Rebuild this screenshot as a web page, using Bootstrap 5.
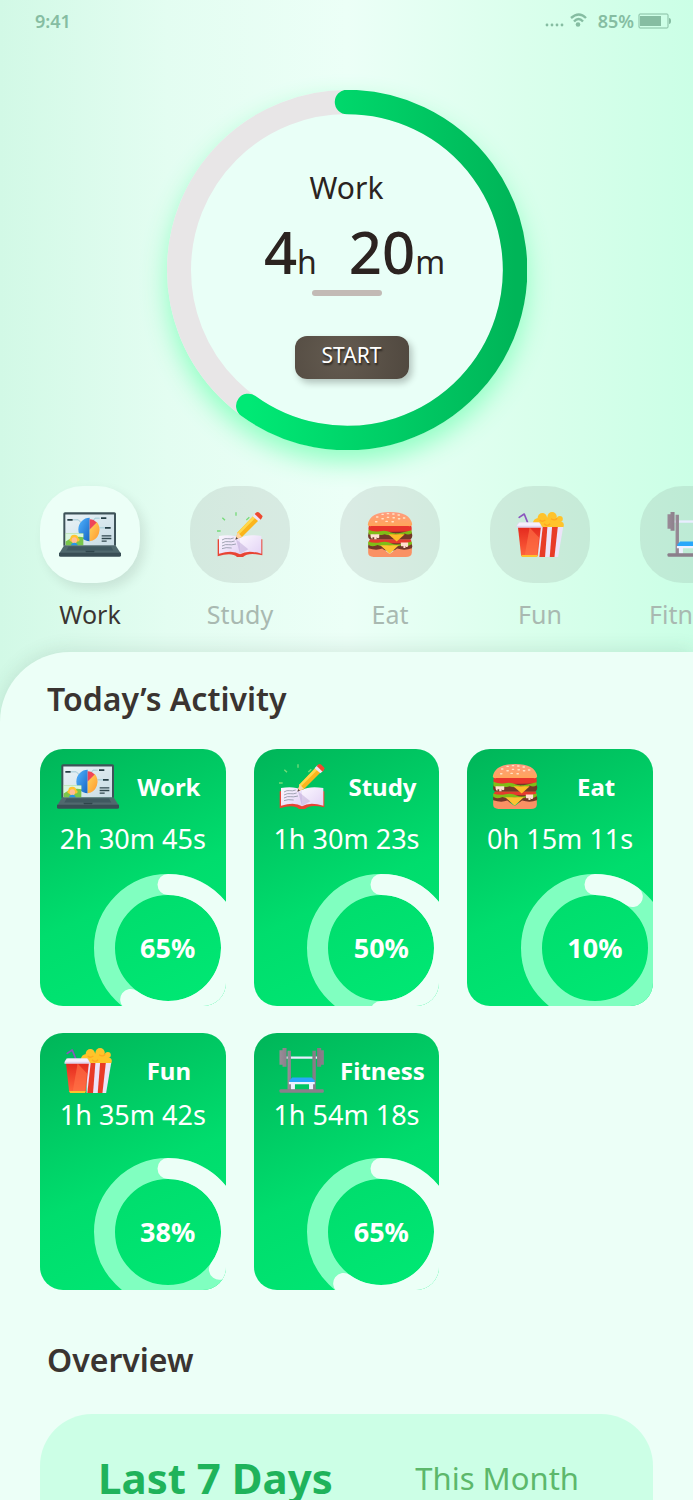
<!DOCTYPE html>
<html lang="en">
<head>
<meta charset="utf-8">
<meta name="viewport" content="width=device-width, initial-scale=1">
<title>Activity Timer</title>
<link href="https://cdn.jsdelivr.net/npm/bootstrap@5.3.0/dist/css/bootstrap.min.css" rel="stylesheet">
<style>
body{font-family:"Noto Sans","Open Sans",sans-serif;color:#3a3431;background:linear-gradient(90deg,#d2f9e6 0,#e3fdf1 24%,#ecfff7 50%,#daffec 76%,#cbffe6 100%);line-height:1.2}
.status{height:44px;padding:0 22px 0 35px;color:#86bda2;font-size:18px;font-weight:600}
.timer{width:360px;height:360px;margin:46px auto 0;border-radius:50%;box-shadow:0 12px 26px #8effc2}
.timer>*{grid-area:1/1}
.timer-body{padding-top:80px;color:#2b2320}
.timer-name{font-size:30px;line-height:36px}
.clock{gap:32px;padding-left:16px;margin-top:8px;line-height:76px;font-size:58px;font-weight:500}
.clock small{font-size:32px;font-weight:400;line-height:1}
.rule{width:70px;height:6px;border-radius:3px;background:#c2bab5}
.start{width:114px;height:43px;margin:40px 0 0 10px;padding:0 0 3px;border:0;border-radius:12px;background:radial-gradient(circle at 40% 45%,#645b50,#50483f);box-shadow:3px 4px 7px #0000003d;color:#fff;font-size:21px;text-shadow:1px 2px 2px #0009}
.start:hover{color:#fff;background:#50483f}
.tabs{gap:50px;padding:36px 40px 0;height:202px}
.tab{width:100px;color:#a9b9b1;font-size:25px;line-height:32px}
.tile{height:97px;margin-bottom:15px;border-radius:43px;background:#60606020}
.tab.active{color:#3a3431}
.tab.active .tile{background:#ecfff7;box-shadow:5px 6px 12px #00000018}
.panel{padding:25px 40px 0;border-radius:70px 0 0;background:#ecfff7;box-shadow:0 -3px 18px #3050401f}
.heading{font-size:32px;font-weight:600;line-height:44px;margin:0;padding-left:7px}
.activities{--bs-gutter-x:28px;--bs-gutter-y:27px;margin-top:1px}
.activity{height:257px;padding-top:15px;border-radius:23px;background:linear-gradient(155deg,#00b559,#00dd6d 55%,#00e974);color:#fff}
.activity-head{padding:0 8px 0 16px}
.icon-box{width:64px}
.activity-name{font-size:24px;font-weight:700;line-height:44px}
.spent{font-size:27px;line-height:36px;margin-top:12px}
.spent.near{margin-top:4px}
.ring{width:148px;height:148px;margin:auto -16px -16px auto}
.ring>*{grid-area:1/1}
.percent{font-size:27px;font-weight:700}
.overview{margin-top:32px;padding:36px 58px 0;border-radius:52px 52px 0 0;background:#ccffe6}
.range{color:#5cb86b;font-size:31px;line-height:56px}
.range.active{color:#1fb35b;font-size:42px;font-weight:700}
</style>
</head>
<body class="vh-100 overflow-hidden d-flex flex-column">
<svg width="0" height="0" class="position-absolute" aria-hidden="true">
<defs>
<linearGradient id="sweep"><stop offset="0" stop-color="#00e975"/><stop offset="1" stop-color="#00b558"/></linearGradient>
<linearGradient id="blue" x2="1" y2="1"><stop stop-color="#52b4ff"/><stop offset="1" stop-color="#1767c5"/></linearGradient>
<linearGradient id="gold" x2="1" y2="1"><stop stop-color="#ffd45c"/><stop offset="1" stop-color="#ff972f"/></linearGradient>
<linearGradient id="bun" x2="0" y2="1"><stop stop-color="#ff9b80"/><stop offset="1" stop-color="#ffa659"/></linearGradient>
<linearGradient id="cup" x2="0" y2="1"><stop stop-color="#e3271d"/><stop offset="1" stop-color="#ff643c"/></linearGradient>
<linearGradient id="steel"><stop stop-color="#9a8c98"/><stop offset=".5" stop-color="#6f6570"/><stop offset="1" stop-color="#8b7f8b"/></linearGradient>
<linearGradient id="screen" x2="1" y2="1"><stop stop-color="#e9f3f7"/><stop offset="1" stop-color="#c8dce4"/></linearGradient>
<linearGradient id="page" x2="1" y2="1"><stop stop-color="#fbf7ff"/><stop offset="1" stop-color="#e3d3f5"/></linearGradient>
</defs>
<symbol id="work" viewBox="0 0 186 134">
<path d="M18 0H166q5 0 5 5V101H13V5q0-5 5-5Z" fill="#3e5359"/><path d="M19 7H165V100H19Z" fill="url(#screen)"/>
<path d="M42 23H58L70 35M98 32L108 18H122M122 47H140" fill="none" stroke="#9fc8d4" stroke-width="3"/>
<path d="M25 23H41M126 18H142M138 47H155" stroke="#263e45" stroke-width="5"/>
<path d="M92 17V87A34 35 0 0 1 92 17Z" fill="url(#blue)"/><path d="M92 52L113 29A34 35 0 0 1 92 87Z" fill="url(#gold)"/><path d="M92 52V21Q105 21 113 31Z" fill="#ef4558"/>
<path d="M128 71H157M128 79H157M128 87H143" stroke="#30474e" stroke-width="4"/>
<path d="M20 64H73V100H20Z" fill="#79c64b"/><path d="M20 64H73V75Q44 70 20 88Z" fill="#d9f5e0"/>
<circle cx="46" cy="80" r="12" fill="#ffc32f"/><circle cx="36" cy="83" r="5" fill="#ffc32f"/><circle cx="57" cy="83" r="5" fill="#ffc32f"/><ellipse cx="46" cy="84" rx="8" ry="9" fill="#ffbd98"/><path d="M36 100q1-8 10-8t10 8Z" fill="#2996e8"/>
<path d="M15 100H170L185 123H1Z" fill="#50696e"/><path d="M29 103H156L163 115H22Z" fill="#405960"/><path d="M79 116H107L105 120H81Z" fill="#2f454b"/><path d="M0 122H186V129q0 5-5 5H5q-5 0-5-5Z" fill="#394e55"/>
</symbol>
<symbol id="study" viewBox="0 0 138 135">
<path d="M2 82H136V130Q93 120 78 135H60Q45 120 2 133Z" fill="#e84434"/>
<path d="M6 72Q45 65 69 78V127Q48 113 6 125Z" fill="url(#page)"/><path d="M69 78Q92 65 133 72V125Q91 113 69 127Z" fill="url(#page)"/><path d="M57 82L94 112L69 126Z" fill="#a68bc5" opacity=".35"/>
<path d="M15 84Q24 78 32 80T50 78M15 93Q26 87 34 89T53 87M15 102Q26 96 34 98T57 96M15 110Q26 105 44 108" fill="none" stroke="#75818e" stroke-width="2"/>
<path d="M111 10L126 24L75 75L56 82L62 61Z" fill="#fbb51d"/><path d="M111 10L117 16L65 68L60 63Z" fill="#ffd84c"/><path d="M62 61L75 75L56 82Z" fill="#ffd3a0"/><path d="M58 75L63 80L55 83Z" fill="#554449"/>
<path d="M107 13L115 4L133 20L124 28Z" fill="#eee5f7"/><path d="M113 6Q120-3 127 2L136 11Q138 15 131 23Z" fill="#ed4930"/>
<path d="M0 57H11M16 17L24 25M57 1V11M88 24L97 16" stroke="#76db79" stroke-width="4"/>
</symbol>
<symbol id="eat" viewBox="0 0 134 134">
<path d="M6 38H129Q135 52 128 61H7Q-1 50 6 38Z" fill="#e8352c"/><path d="M4 60Q-2 77 8 83H127Q138 75 130 58Z" fill="#743728"/><path d="M8 82H130V96H6Q0 88 8 82Z" fill="#e53b2d"/><path d="M4 93H131Q137 107 127 115H8Q-2 109 4 93Z" fill="#743728"/>
<path d="M3 53Q18 60 37 57T70 61T131 54L132 63Q121 71 111 64Q98 72 84 65Q67 73 51 66Q35 71 22 66Q8 72 3 65Z" fill="#80bd17"/>
<path d="M62 66H111L87 88Z" fill="#ffbb27"/><path d="M9 66H35V76Q31 81 27 75V81H20V75H15V80Q8 78 9 66Z" fill="#ffe0cf"/>
<path d="M2 88Q20 94 39 90T72 94T132 88V96Q118 105 103 98Q87 105 66 99Q46 106 30 98Q11 106 2 97Z" fill="#80bd17"/><path d="M38 99H93L66 124Z" fill="#ffc231"/><path d="M99 91H121V101Q117 108 113 101V107H107V102H100Z" fill="#ffe0cf"/>
<path d="M2 108Q26 116 44 109L66 125L88 109Q112 116 132 108V121Q131 134 114 134H18Q2 132 2 121Z" fill="#fa9164"/>
<path d="M1 37Q7 0 67 0T133 37Q133 43 122 42H12Q0 43 1 37Z" fill="url(#bun)"/>
<path d="M27 15h4M43 7h4M59 5h4M75 6h4M91 9h4M43 20h4M59 16h4M76 17h4M92 20h4M107 18h4M24 29h4M55 28h4M73 29h4" stroke="#ffe2c5" stroke-width="4" stroke-linecap="round"/>
</symbol>
<symbol id="fun" viewBox="0 0 142 134">
<path d="M9 16L24 6L34 31" fill="none" stroke="#8b56be" stroke-width="5" stroke-linecap="round" stroke-linejoin="round"/>
<g fill="#ffc32a"><circle cx="66" cy="34" r="16"/><circle cx="78" cy="17" r="14"/><circle cx="93" cy="34" r="18"/><circle cx="107" cy="14" r="14"/><circle cx="130" cy="21" r="9"/><circle cx="117" cy="36" r="17"/><circle cx="132" cy="39" r="10"/></g><path d="M83 35q9 10 18 0M104 20q12 8 18-2M70 24q7 7 17 0" fill="none" stroke="#ffa820" stroke-width="4"/>
<path d="M65 45H140L125 134H67Z" fill="#ece3f8"/><path d="M79 45H93L86 134H69Z" fill="#e83b27"/><path d="M107 45H124L114 134H100Z" fill="#e83b27"/>
<path d="M5 42H74L64 132H15Z" fill="url(#cup)"/><path d="M40 46L68 76L61 132H25Z" fill="#ff7146" opacity=".65"/><path d="M15 128H64L62 134H18Z" fill="#ffc12b"/>
<path d="M7 31H70L77 44V47H1V42Z" fill="#e1d6ee"/><path d="M10 31H68L74 41H2Z" fill="#f5effc"/>
</symbol>
<symbol id="fitness" viewBox="0 0 134 134">
<path d="M20 25H113V32H20Z" fill="#e9edff"/><path d="M24 8H34V126H24ZM98 8H108V126H98Z" fill="url(#steel)"/>
<path d="M0 7H9V0H21V56H9V50H0ZM112 0H124V7H132V50H124V56H112Z" fill="url(#steel)"/>
<path d="M30 96L38 88H96L104 96V103H30Z" fill="#28a7fa"/><path d="M28 101H105V108H100V124H88V108H46V124H34V108H28Z" fill="#eef0ff"/><path d="M0 126q0-3 4-3H128q4 0 4 4v3q0 3-4 3H4q-4 0-4-3Z" fill="#8b7f8b"/>
</symbol>
</svg>

<header class="status d-flex align-items-center flex-shrink-0">
<span class="me-auto">9:41</span>
<svg width="46" height="20" viewBox="0 0 46 20" fill="#86bda2" aria-hidden="true"><circle cx="3" cy="13" r="1.4"/><circle cx="8" cy="13" r="1.4"/><circle cx="13" cy="13" r="1.4"/><circle cx="18" cy="13" r="1.4"/><circle cx="34" cy="12.500" r="2.3"/><path d="M27 6q8-7 15 0M30 9.500q4.500-5 9 0" fill="none" stroke="#86bda2" stroke-width="2.400"/></svg>
<span class="ms-2">85%</span>
<svg class="ms-1" width="33" height="20" viewBox="0 0 33 20" aria-hidden="true"><rect x="1" y="2" width="29" height="14" rx="1" fill="none" stroke="#86bda2"/><path d="M2 4H23V14H2ZM31 6q2 0 2 3t-2 3Z" fill="#86bda2"/></svg>
</header>

<section class="timer d-grid flex-shrink-0" aria-label="Current timer">
<svg width="360" height="360" viewBox="0 0 360 360" aria-hidden="true"><circle cx="180" cy="180" r="168" fill="#e9fff7" stroke="#e8e6e7" stroke-width="24"/><path d="M180 12A168 168 0 1 1 81.3 315.9" fill="none" stroke="url(#sweep)" stroke-width="24.5" stroke-linecap="round"/></svg>
<div class="timer-body d-flex flex-column align-items-center">
<div class="timer-name">Work</div>
<div class="clock d-flex"><span>4<small>h</small></span><span>20<small>m</small></span></div>
<div class="rule"></div>
<button type="button" class="btn start">START</button>
</div>
</section>

<nav class="tabs d-flex flex-shrink-0 overflow-hidden" aria-label="Activities">
<button type="button" class="tab active flex-shrink-0 p-0 border-0 bg-transparent align-self-start"><span class="tile d-flex align-items-center justify-content-center"><svg width="62" height="45" aria-hidden="true"><use href="#work"/></svg></span>Work</button>
<button type="button" class="tab flex-shrink-0 p-0 border-0 bg-transparent align-self-start"><span class="tile d-flex align-items-center justify-content-center"><svg width="46" height="45" aria-hidden="true"><use href="#study"/></svg></span>Study</button>
<button type="button" class="tab flex-shrink-0 p-0 border-0 bg-transparent align-self-start"><span class="tile d-flex align-items-center justify-content-center"><svg width="46" height="45" aria-hidden="true"><use href="#eat"/></svg></span>Eat</button>
<button type="button" class="tab flex-shrink-0 p-0 border-0 bg-transparent align-self-start"><span class="tile d-flex align-items-center justify-content-center"><svg width="48" height="45" aria-hidden="true"><use href="#fun"/></svg></span>Fun</button>
<button type="button" class="tab flex-shrink-0 p-0 border-0 bg-transparent align-self-start"><span class="tile d-flex align-items-center justify-content-center"><svg width="46" height="45" aria-hidden="true"><use href="#fitness"/></svg></span>Fitness</button>
</nav>

<main class="panel d-flex flex-column flex-grow-1">
<h2 class="heading">Today’s Activity</h2>
<div class="row row-cols-3 activities">
<div class="col"><article class="activity d-flex flex-column overflow-hidden"><div class="activity-head d-flex align-items-center"><span class="icon-box text-center lh-1"><svg width="62" height="45" aria-hidden="true"><use href="#work"/></svg></span><span class="activity-name flex-grow-1 text-center">Work</span></div><div class="spent text-center">2h 30m 45s</div><div class="ring d-grid"><svg viewBox="0 0 148 148" fill="none" stroke-width="21" aria-hidden="true"><circle cx="74" cy="74" r="63.5" stroke="#80ffc0"/><path d="M74 10.5A63.5 63.5 0 1 1 36.7 125.4" stroke="#ecfff7" stroke-linecap="round"/></svg><span class="percent m-auto">65%</span></div></article></div>
<div class="col"><article class="activity d-flex flex-column overflow-hidden"><div class="activity-head d-flex align-items-center"><span class="icon-box text-center lh-1"><svg width="46" height="45" aria-hidden="true"><use href="#study"/></svg></span><span class="activity-name flex-grow-1 text-center">Study</span></div><div class="spent text-center">1h 30m 23s</div><div class="ring d-grid"><svg viewBox="0 0 148 148" fill="none" stroke-width="21" aria-hidden="true"><circle cx="74" cy="74" r="63.5" stroke="#80ffc0"/><path d="M74 10.5A63.5 63.5 0 0 1 74 137.5" stroke="#ecfff7" stroke-linecap="round"/></svg><span class="percent m-auto">50%</span></div></article></div>
<div class="col"><article class="activity d-flex flex-column overflow-hidden"><div class="activity-head d-flex align-items-center"><span class="icon-box text-center lh-1"><svg width="46" height="45" aria-hidden="true"><use href="#eat"/></svg></span><span class="activity-name flex-grow-1 text-center">Eat</span></div><div class="spent text-center">0h 15m 11s</div><div class="ring d-grid"><svg viewBox="0 0 148 148" fill="none" stroke-width="21" aria-hidden="true"><circle cx="74" cy="74" r="63.5" stroke="#80ffc0"/><path d="M74 10.5A63.5 63.5 0 0 1 111.3 22.6" stroke="#ecfff7" stroke-linecap="round"/></svg><span class="percent m-auto">10%</span></div></article></div>
<div class="col"><article class="activity d-flex flex-column overflow-hidden"><div class="activity-head d-flex align-items-center"><span class="icon-box text-center lh-1"><svg width="48" height="45" aria-hidden="true"><use href="#fun"/></svg></span><span class="activity-name flex-grow-1 text-center">Fun</span></div><div class="spent near text-center">1h 35m 42s</div><div class="ring d-grid"><svg viewBox="0 0 148 148" fill="none" stroke-width="21" aria-hidden="true"><circle cx="74" cy="74" r="63.5" stroke="#80ffc0"/><path d="M74 10.5A63.5 63.5 0 0 1 125.4 111.3" stroke="#ecfff7" stroke-linecap="round"/></svg><span class="percent m-auto">38%</span></div></article></div>
<div class="col"><article class="activity d-flex flex-column overflow-hidden"><div class="activity-head d-flex align-items-center"><span class="icon-box text-center lh-1"><svg width="46" height="45" aria-hidden="true"><use href="#fitness"/></svg></span><span class="activity-name flex-grow-1 text-center">Fitness</span></div><div class="spent near text-center">1h 54m 18s</div><div class="ring d-grid"><svg viewBox="0 0 148 148" fill="none" stroke-width="21" aria-hidden="true"><circle cx="74" cy="74" r="63.5" stroke="#80ffc0"/><path d="M74 10.5A63.5 63.5 0 1 1 36.7 125.4" stroke="#ecfff7" stroke-linecap="round"/></svg><span class="percent m-auto">65%</span></div></article></div>
</div>
<h2 class="heading mt-5">Overview</h2>
<section class="overview d-flex justify-content-between flex-grow-1">
<button type="button" class="range active p-0 border-0 bg-transparent align-self-start">Last 7 Days</button>
<button type="button" class="range p-0 border-0 bg-transparent align-self-start me-3">This Month</button>
</section>
</main>
<script src="https://cdn.jsdelivr.net/npm/bootstrap@5.3.0/dist/js/bootstrap.bundle.min.js"></script>
</body>
</html>
